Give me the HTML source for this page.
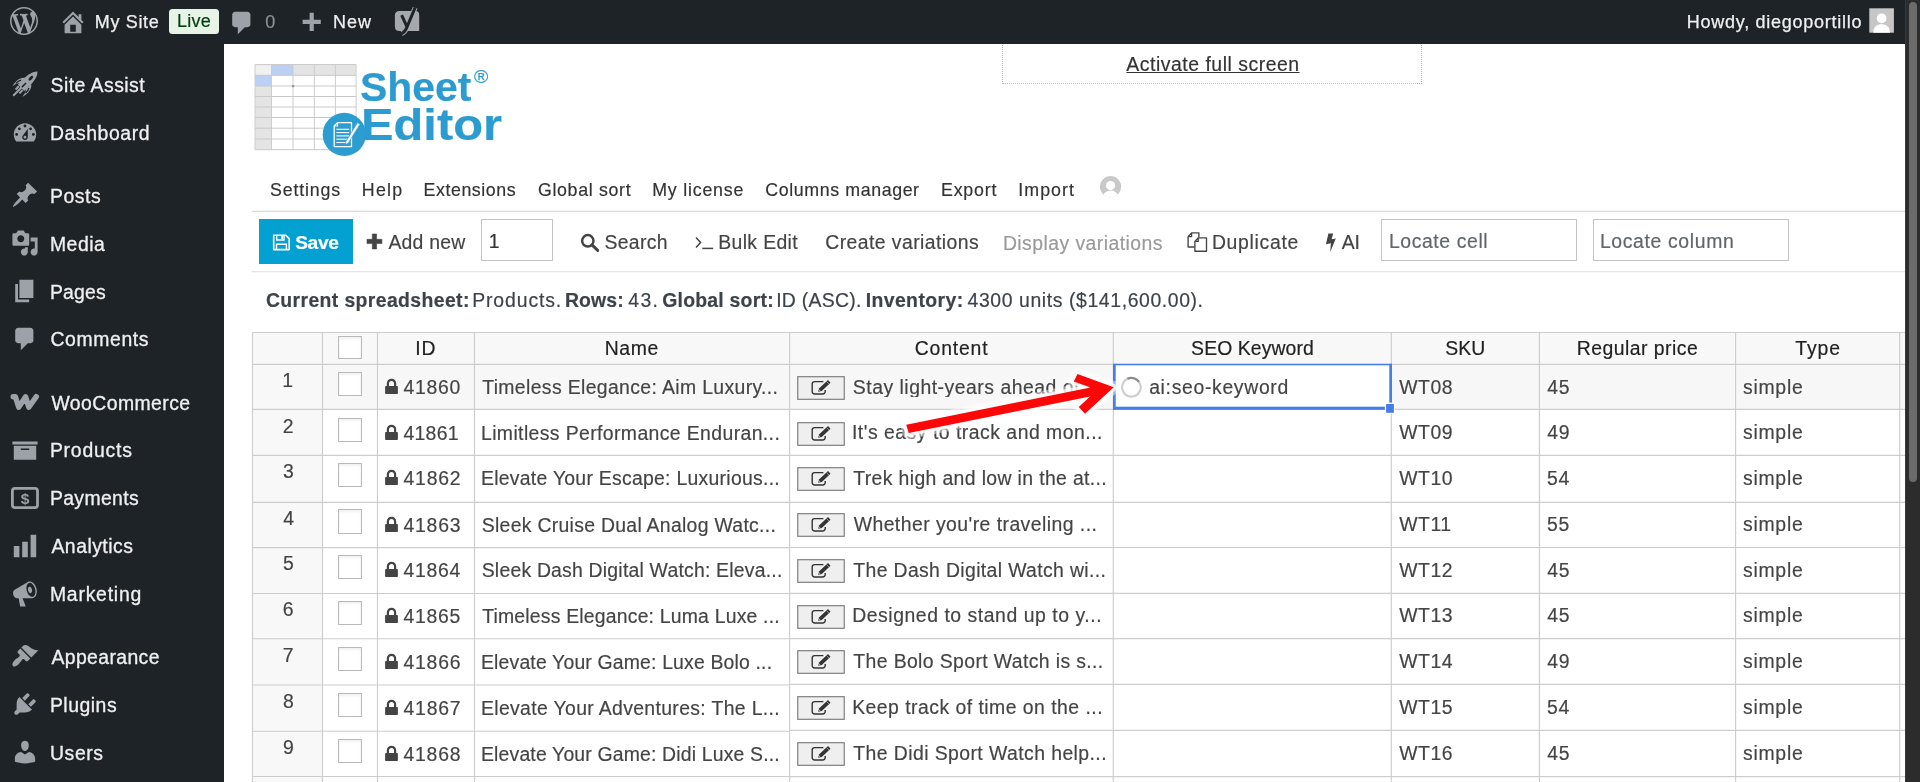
<!DOCTYPE html>
<html lang="en"><head><meta charset="utf-8"><title>Sheet Editor - Products</title>
<style>
html,body{margin:0;padding:0;background:#fff}
body{width:1920px;height:782px;overflow:hidden;position:relative;font-family:"Liberation Sans", sans-serif}
#wrap{position:absolute;left:0;top:0;width:1920px;height:782px;overflow:hidden;will-change:transform}
.t{position:absolute;white-space:nowrap;line-height:1;display:block;-webkit-text-stroke:0.18px currentColor}
.r{position:absolute;display:block;overflow:visible}
</style></head>
<body>
<div id="wrap">
<div class="r" style="left:1002px;top:40px;width:417.6px;height:42px;border:1px dotted #b4b4b4;box-sizing:content-box"></div>
<div class="r" style="left:0px;top:0px;width:1920px;height:44px;background:#1d2327;"></div>
<div class="r" style="left:0px;top:44px;width:224px;height:738px;background:#1d2327;"></div>
<svg class="r" style="left:9.7px;top:6.9px" width="28" height="28" viewBox="0 0 20 20"><path d="M20 10c0-5.51-4.49-10-10-10C4.48 0 0 4.49 0 10c0 5.52 4.48 10 10 10 5.51 0 10-4.48 10-10zM7.78 15.37L4.37 6.22c.55-.02 1.17-.08 1.17-.08.5-.06.44-1.13-.06-1.11 0 0-1.45.11-2.37.11-.18 0-.37 0-.58-.01C4.12 2.69 6.87 1.11 10 1.11c2.33 0 4.45.87 6.05 2.34-.68-.11-1.65.39-1.65 1.58 0 .74.45 1.36.9 2.1.35.61.55 1.36.55 2.46 0 1.49-1.4 5-1.4 5l-3.03-8.37c.54-.02.82-.17.82-.17.5-.05.44-1.25-.06-1.22 0 0-1.44.12-2.38.12-.87 0-2.33-.12-2.33-.12-.5-.03-.56 1.2-.06 1.22l.92.08 1.26 3.41zM17.41 10c.24-.64.74-1.87.43-4.25.7 1.29 1.05 2.71 1.05 4.25 0 3.29-1.73 6.24-4.4 7.78.97-2.59 1.94-5.2 2.92-7.78zM6.1 18.09C3.12 16.65 1.11 13.53 1.11 10c0-1.3.23-2.48.72-3.59C3.25 10.3 4.67 14.2 6.1 18.09zm4.03-6.63l2.58 6.98c-.86.29-1.76.45-2.71.45-.79 0-1.57-.11-2.29-.33.81-2.38 1.62-4.74 2.42-7.1z" fill="#9ca2a7"/></svg>
<svg class="r" style="left:58.8px;top:8.0px" width="28" height="28" viewBox="0 0 20 20"><path d="M16 8.5l1.53 1.53-1.06 1.06L10 4.62l-6.47 6.47-1.06-1.06L10 2.5l4 4v-2h2v4zm-6-2.46l6 5.99V18H4v-5.97zM12 17v-5H8v5h4z" fill="#9ca2a7"/></svg>
<span class="t" id="t1" style="left:94.82px;top:13.00px;font-size:18px;color:#f0f0f1;letter-spacing:0.660px;-webkit-text-stroke:0.25px #f0f0f1;">My Site</span>
<div class="r" style="left:169px;top:9px;width:50px;height:24.8px;background:#e7f3e7;border-radius:3.5px;"></div>
<span class="t" id="t2" style="left:177.12px;top:12.00px;font-size:18px;color:#07400f;letter-spacing:0.215px;-webkit-text-stroke:0.2px #07400f;">Live</span>
<svg class="r" style="left:228.4px;top:9.2px" width="28" height="28" viewBox="0 0 20 20"><path d="M5 2h9q.82 0 1.41.59T16 4v7q0 .82-.59 1.41T14 13h-2l-5 5v-5H5q-.82 0-1.41-.59T3 11V4q0-.82.59-1.41T5 2z" fill="#9ca2a7"/></svg>
<span class="t" id="t3" style="left:265.30px;top:13.00px;font-size:18px;color:#8c9196;">0</span>
<svg class="r" style="left:297.4px;top:9.8px" width="28" height="28" viewBox="0 0 20 20"><path d="M17 7v3h-5v5H9v-5H4V7h5V2h3v5h5z" fill="#9ca2a7"/></svg>
<span class="t" id="t4" style="left:333.12px;top:13.00px;font-size:18px;color:#f0f0f1;letter-spacing:0.908px;-webkit-text-stroke:0.25px #f0f0f1;">New</span>
<svg class="r" style="left:390px;top:2px" width="36" height="40" viewBox="390 2 36 40">
<path d="M399.4 11 H415.5 Q419.2 11 419.2 14.7 V31 H399.4 Q394.9 31 394.9 26.5 V15.5 Q394.9 11 399.4 11 Z" fill="#a5a9ae"/>
<path d="M415.2 7.6 L406.8 27.5 Q405 32.2 401.6 33.6 M401.6 15.4 L406.9 26.6" fill="none" stroke="#a5a9ae" stroke-width="5" stroke-linecap="butt" stroke-linejoin="round"/>
<path d="M415.2 7.4 L406.8 27.5 Q405 32.2 401.4 33.8 M401.6 15.2 L406.9 26.6" fill="none" stroke="#1d2327" stroke-width="3" stroke-linecap="butt" stroke-linejoin="round"/>
</svg>
<span class="t" id="t5" style="left:1686.82px;top:13.00px;font-size:18px;color:#f0f0f1;letter-spacing:0.730px;-webkit-text-stroke:0.25px #f0f0f1;">Howdy, diegoportillo</span>
<svg class="r" style="left:1869px;top:8px" width="26" height="26" viewBox="0 0 26 26">
<rect x="0.3" y="0.3" width="24.6" height="24.4" fill="#c6c6c6"/>
<circle cx="12.6" cy="10.3" r="4.9" fill="#fff"/>
<path d="M4.3 24.7 C4.3 18.5 8 16.2 12.6 16.2 C17.2 16.2 20.9 18.5 20.9 24.7 Z" fill="#fff"/>
</svg>
<span class="t" id="t6" style="left:50.62px;top:76.00px;font-size:19.4px;color:#f0f0f1;letter-spacing:0.457px;-webkit-text-stroke:0.3px #f0f0f1;">Site Assist</span>
<svg class="r" style="left:7.3px;top:66.0px" width="36" height="36" viewBox="-18 -18 36 36">
<g transform="rotate(45.3)" fill="#9ca2a7">
<path d="M0 -17.6 C4.2 -13.5 5.2 -6 4.4 5.6 L-4.4 5.6 C-5.2 -6 -4.2 -13.5 0 -17.6 Z"/>
<path d="M-4.3 -4.5 C-8.6 -1.5 -9 5 -7.2 10.8 C-6.8 7 -6 4.6 -4.3 3.2 Z M4.3 -4.5 C8.6 -1.5 9 5 7.2 10.8 C6.8 7 6 4.6 4.3 3.2 Z"/>
<path d="M0 5 L0 16.6 M-2.7 6 L-2.7 10.6 M2.7 6 L2.7 10.6" fill="none" stroke="#9ca2a7" stroke-width="2"/>
<ellipse cx="0" cy="-8.2" rx="1.5" ry="3" fill="#1d2327"/>
<path d="M-5.6 0 C-6.8 2 -7 4 -6.8 6 M5.6 0 C6.8 2 7 4 6.8 6" stroke="#1d2327" stroke-width="1.3" fill="none"/>
<path d="M0 -1.5 L0 4.4" stroke="#1d2327" stroke-width="1.5"/>
</g></svg>
<span class="t" id="t7" style="left:49.91px;top:124.00px;font-size:19.4px;color:#f0f0f1;letter-spacing:0.596px;-webkit-text-stroke:0.3px #f0f0f1;">Dashboard</span>
<svg class="r" style="left:10.8px;top:118.7px" width="28" height="28" viewBox="0 0 20 20"><path d="M3.76 16h12.48c1.1-1.37 1.76-3.11 1.76-5 0-4.42-3.58-8-8-8s-8 3.58-8 8c0 1.89.66 3.63 1.76 5zM10 4c.55 0 1 .45 1 1s-.45 1-1 1-1-.45-1-1 .45-1 1-1zM6 6c.55 0 1 .45 1 1s-.45 1-1 1-1-.45-1-1 .45-1 1-1zm8 0c.55 0 1 .45 1 1s-.45 1-1 1-1-.45-1-1 .45-1 1-1zm-5.37 5.55L12 7v6c0 1.1-.9 2-2 2s-2-.9-2-2c0-.57.24-1.08.63-1.45zM4 10c.55 0 1 .45 1 1s-.45 1-1 1-1-.45-1-1 .45-1 1-1zm12 0c.55 0 1 .45 1 1s-.45 1-1 1-1-.45-1-1 .45-1 1-1zm-5 3c0-.55-.45-1-1-1s-1 .45-1 1 .45 1 1 1 1-.45 1-1z" fill="#9ca2a7"/></svg>
<span class="t" id="t8" style="left:49.91px;top:187.00px;font-size:19.4px;color:#f0f0f1;letter-spacing:0.573px;-webkit-text-stroke:0.3px #f0f0f1;">Posts</span>
<svg class="r" style="left:10.8px;top:181.4px" width="28" height="28" viewBox="0 0 20 20"><path d="M10.44 3.02l1.82-1.82 6.36 6.35-1.83 1.82c-1.05-.68-2.48-.57-3.41.36l-.75.75c-.92.93-1.04 2.35-.35 3.41l-1.83 1.82-2.41-2.41-2.8 2.79c-.42.42-3.38 2.71-3.8 2.29s1.86-3.39 2.28-3.81l2.79-2.79L4.1 9.36l1.83-1.82c1.05.69 2.48.57 3.4-.36l.75-.75c.93-.92 1.05-2.35.36-3.41z" fill="#9ca2a7"/></svg>
<span class="t" id="t9" style="left:49.91px;top:235.00px;font-size:19.4px;color:#f0f0f1;letter-spacing:0.541px;-webkit-text-stroke:0.3px #f0f0f1;">Media</span>
<svg class="r" style="left:10.8px;top:229.4px" width="28" height="28" viewBox="0 0 20 20"><path d="M13 11V4c0-.55-.45-1-1-1h-1.67L9 1H5L3.67 3H2c-.55 0-1 .45-1 1v7c0 .55.45 1 1 1h10c.55 0 1-.45 1-1zM7 4.5c1.38 0 2.5 1.12 2.5 2.5S8.38 9.5 7 9.5 4.5 8.38 4.5 7 5.62 4.5 7 4.5zM14 6h5v10.5c0 1.38-1.12 2.5-2.5 2.5S14 17.88 14 16.5s1.12-2.5 2.5-2.5c.17 0 .34.02.5.05V9h-3V6zm-4 8.05V13h2v3.5c0 1.38-1.12 2.5-2.5 2.5S7 17.88 7 16.5 8.12 14 9.5 14c.17 0 .34.02.5.05z" fill="#9ca2a7"/></svg>
<span class="t" id="t10" style="left:49.91px;top:283.00px;font-size:19.4px;color:#f0f0f1;letter-spacing:0.177px;-webkit-text-stroke:0.3px #f0f0f1;">Pages</span>
<svg class="r" style="left:10.8px;top:277.3px" width="28" height="28" viewBox="0 0 20 20"><path d="M6 15V2h10v13H6zm-1 1h8v2H3V5h2v11z" fill="#9ca2a7"/></svg>
<span class="t" id="t11" style="left:50.51px;top:330.00px;font-size:19.4px;color:#f0f0f1;letter-spacing:0.605px;-webkit-text-stroke:0.3px #f0f0f1;">Comments</span>
<svg class="r" style="left:10.8px;top:324.8px" width="28" height="28" viewBox="0 0 20 20"><path d="M5 2h9q.82 0 1.41.59T16 4v7q0 .82-.59 1.41T14 13h-2l-5 5v-5H5q-.82 0-1.41-.59T3 11V4q0-.82.59-1.41T5 2z" fill="#9ca2a7"/></svg>
<span class="t" id="t12" style="left:51.41px;top:394.00px;font-size:19.4px;color:#f0f0f1;letter-spacing:0.440px;-webkit-text-stroke:0.3px #f0f0f1;">WooCommerce</span>
<svg class="r" style="left:8px;top:389.8px" width="36" height="24" viewBox="8 -12 36 24">
<path d="M13.2 -5.3 L15.4 -5.3 L18.7 5.2 L25.6 -5.2 L28.8 5.2 L36.3 -5.4" fill="none" stroke="#9ca2a7" stroke-width="5.4" stroke-linecap="round" stroke-linejoin="round"/></svg>
<span class="t" id="t13" style="left:49.91px;top:441.00px;font-size:19.4px;color:#f0f0f1;letter-spacing:0.780px;-webkit-text-stroke:0.3px #f0f0f1;">Products</span>
<svg class="r" style="left:10.8px;top:435.7px" width="28" height="28" viewBox="0 0 20 20"><path d="M19 4v2H1V4h18zM2 7h16v10H2V7zm11 3V9H7v1h6z" fill="#9ca2a7"/></svg>
<span class="t" id="t14" style="left:49.91px;top:489.00px;font-size:19.4px;color:#f0f0f1;letter-spacing:0.368px;-webkit-text-stroke:0.3px #f0f0f1;">Payments</span>
<svg class="r" style="left:8px;top:483.9px" width="36" height="28" viewBox="8 -14 36 28">
<rect x="12.4" y="-9.6" width="25.1" height="19.2" rx="2.6" fill="none" stroke="#9ca2a7" stroke-width="2.8"/>
<text x="25.1" y="5.6" font-family="Liberation Sans, sans-serif" font-weight="700" font-size="15.5" text-anchor="middle" fill="#9ca2a7">$</text></svg>
<span class="t" id="t15" style="left:51.46px;top:537.00px;font-size:19.4px;color:#f0f0f1;letter-spacing:0.481px;-webkit-text-stroke:0.3px #f0f0f1;">Analytics</span>
<svg class="r" style="left:10.8px;top:531.6px" width="28" height="28" viewBox="0 0 20 20"><path d="M18 18V2h-4v16h4zm-6 0V7H8v11h4zm-6 0v-8H2v8h4z" fill="#9ca2a7"/></svg>
<span class="t" id="t16" style="left:49.91px;top:585.00px;font-size:19.4px;color:#f0f0f1;letter-spacing:0.775px;-webkit-text-stroke:0.3px #f0f0f1;">Marketing</span>
<svg class="r" style="left:10.8px;top:579.5px" width="28" height="28" viewBox="0 0 20 20"><path d="M18.15 5.94c.46 1.62.38 3.22-.02 4.48-.42 1.28-1.26 2.18-2.3 2.48-.16.06-.26.06-.4.06-.06.02-.12.02-.18.02-.06.02-.14.02-.22.02h-6.8l2.22 5.5c.02.14-.06.26-.14.34-.08.1-.24.16-.34.16H6.95c-.1 0-.26-.06-.34-.16-.08-.08-.16-.2-.14-.34l-1-5.5H4.25l-.02-.02c-.5.06-1.08-.18-1.54-.62s-.88-1.08-1.06-1.88c-.24-.8-.2-1.56-.02-2.2.18-.62.58-1.08 1.06-1.3l.02-.02 9-5.4c.1-.06.18-.1.24-.16.06-.04.14-.08.24-.12.16-.08.28-.12.5-.18 1.04-.3 2.24.1 3.22.98s1.84 2.24 2.26 3.86zm-2.58 5.98h-.02c.4-.1.74-.34 1.04-.7.58-.7.86-1.76.86-3.04 0-.64-.1-1.3-.28-1.98-.34-1.36-1.02-2.5-1.78-3.24s-1.68-1.1-2.46-.88c-.82.22-1.4.96-1.7 2-.32 1.04-.28 2.36.06 3.72.38 1.36 1 2.5 1.8 3.24.78.74 1.62 1.1 2.48.88zm-2.54-7.08c.22-.04.42-.02.62.04.38.16.76.48 1.02 1s.42 1.2.42 1.78c0 .3-.04.56-.12.8-.18.48-.44.84-.86.94-.34.1-.8-.06-1.14-.4s-.64-.86-.78-1.5c-.18-.62-.12-1.24.02-1.72s.48-.84.82-.94z" fill="#9ca2a7"/></svg>
<span class="t" id="t17" style="left:51.46px;top:648.00px;font-size:19.4px;color:#f0f0f1;letter-spacing:0.380px;-webkit-text-stroke:0.3px #f0f0f1;">Appearance</span>
<svg class="r" style="left:10.8px;top:642.2px" width="28" height="28" viewBox="0 0 20 20"><path d="M14.48 11.06L7.41 3.99l1.5-1.5c.5-.56 2.3-.47 3.51.32 1.21.8 1.43 1.28 2.91 2.1 1.18.64 2.45 1.26 4.45.85zm-.71.71L6.7 4.7 4.93 6.47c-.39.39-.39 1.02 0 1.41l1.06 1.06c.39.39.39 1.03 0 1.42-.6.6-1.43 1.11-2.21 1.69-.35.26-.7.53-1.01.84C1.43 14.23.4 16.08 1.4 17.07c.99 1 2.84-.03 4.18-1.36.31-.31.58-.66.85-1.02.57-.78 1.08-1.61 1.69-2.21.39-.39 1.02-.39 1.41 0l1.06 1.06c.39.39 1.02.39 1.41 0z" fill="#9ca2a7"/></svg>
<span class="t" id="t18" style="left:49.91px;top:696.00px;font-size:19.4px;color:#f0f0f1;letter-spacing:0.514px;-webkit-text-stroke:0.3px #f0f0f1;">Plugins</span>
<svg class="r" style="left:10.8px;top:690.3px" width="28" height="28" viewBox="0 0 20 20"><path d="M13.11 4.36L9.87 7.6 8 5.73l3.24-3.24c.35-.34 1.05-.2 1.56.32.52.51.66 1.21.31 1.55zm-8 1.77l.91-1.12 9.01 9.01-1.19.84c-.71.71-2.63 1.16-3.82 1.16H6.14L4.9 17.26c-.59.59-1.54.59-2.12 0-.59-.58-.59-1.53 0-2.12l1.24-1.24v-3.88c0-1.13.4-3.19 1.09-3.89zm7.26 3.97l3.24-3.24c.34-.35 1.04-.21 1.55.31.52.51.66 1.21.31 1.55l-3.24 3.25z" fill="#9ca2a7"/></svg>
<span class="t" id="t19" style="left:50.00px;top:744.00px;font-size:19.4px;color:#f0f0f1;letter-spacing:0.589px;-webkit-text-stroke:0.3px #f0f0f1;">Users</span>
<svg class="r" style="left:10.8px;top:738.1px" width="28" height="28" viewBox="0 0 20 20"><path d="M10 9.25c-2.27 0-2.73-3.44-2.73-3.44C7 4.02 7.82 2 9.97 2c2.16 0 2.98 2.02 2.71 3.81 0 0-.41 3.44-2.68 3.44zm0 2.57L12.72 10c2.39 0 4.52 2.33 4.52 4.53v2.49s-3.65 1.13-7.24 1.13c-3.65 0-7.24-1.13-7.24-1.13v-2.49c0-2.25 1.94-4.48 4.47-4.48z" fill="#9ca2a7"/></svg>
<span class="t" id="t20" style="left:1126.36px;top:55.00px;font-size:19.4px;color:#333;letter-spacing:0.524px;text-decoration:underline;text-decoration-thickness:1.4px;text-underline-offset:0.8px;">Activate full screen</span>
<svg class="r" style="left:250px;top:60px" width="120" height="100" viewBox="250 60 120 100"><rect x="255" y="64.6" width="101.1" height="85.1" fill="#fff"/><rect x="255" y="64.6" width="101.1" height="10.7" fill="#e4e4e4"/><rect x="255" y="64.6" width="16.5" height="85.1" fill="#e4e4e4"/><rect x="255" y="64.6" width="16.5" height="10.7" fill="#f1f1f1"/><rect x="271.5" y="64.6" width="21.5" height="10.7" fill="#bcd0f6"/><rect x="255" y="75.3" width="16.5" height="10.7" fill="#bcd0f6"/><line x1="255" y1="64.6" x2="255" y2="149.7" stroke="#cdcdcd" stroke-width="1"/><line x1="271.5" y1="64.6" x2="271.5" y2="149.7" stroke="#cdcdcd" stroke-width="1"/><line x1="293" y1="64.6" x2="293" y2="149.7" stroke="#cdcdcd" stroke-width="1"/><line x1="314.4" y1="64.6" x2="314.4" y2="149.7" stroke="#cdcdcd" stroke-width="1"/><line x1="335.4" y1="64.6" x2="335.4" y2="149.7" stroke="#cdcdcd" stroke-width="1"/><line x1="356.1" y1="64.6" x2="356.1" y2="149.7" stroke="#cdcdcd" stroke-width="1"/><line x1="255" y1="64.6" x2="356.1" y2="64.6" stroke="#c9c9c9" stroke-width="1"/><line x1="255" y1="75.3" x2="356.1" y2="75.3" stroke="#c9c9c9" stroke-width="1"/><line x1="255" y1="86" x2="356.1" y2="86" stroke="#c9c9c9" stroke-width="1"/><line x1="255" y1="96.5" x2="356.1" y2="96.5" stroke="#c9c9c9" stroke-width="1"/><line x1="255" y1="107" x2="356.1" y2="107" stroke="#c9c9c9" stroke-width="1"/><line x1="255" y1="117.5" x2="356.1" y2="117.5" stroke="#c9c9c9" stroke-width="1"/><line x1="255" y1="128.2" x2="356.1" y2="128.2" stroke="#c9c9c9" stroke-width="1"/><line x1="255" y1="139" x2="356.1" y2="139" stroke="#c9c9c9" stroke-width="1"/><line x1="255" y1="149.7" x2="356.1" y2="149.7" stroke="#c9c9c9" stroke-width="1"/><rect x="292" y="85" width="2.2" height="2.2" fill="#999"/><circle cx="344.3" cy="134.4" r="21.6" fill="#2b9dd1"/><path d="M337.6 122.6 H351.5 V146.6 H334.2 V126 Z" fill="none" stroke="#fff" stroke-width="1.3" stroke-linejoin="round"/><path d="M337.6 122.6 V126 H334.2" fill="none" stroke="#fff" stroke-width="1.1"/><line x1="336.3" y1="129.3" x2="349.2" y2="129.3" stroke="#fff" stroke-width="1.1"/><line x1="336.3" y1="132.6" x2="349.2" y2="132.6" stroke="#fff" stroke-width="1.1"/><line x1="336.3" y1="135.9" x2="349.2" y2="135.9" stroke="#fff" stroke-width="1.1"/><line x1="336.3" y1="139.2" x2="349.2" y2="139.2" stroke="#fff" stroke-width="1.1"/><line x1="336.3" y1="142.5" x2="349.2" y2="142.5" stroke="#fff" stroke-width="1.1"/><path d="M357.5 122.6 L346.0 141.2 L345.3 145.0 L348.5 142.8 L360.0 124.2 Z" fill="#fff" stroke="#2b9dd1" stroke-width="0.7"/></svg>
<span class="t" id="t21" style="left:360.12px;top:68.00px;font-size:40.2px;color:#2b9bd0;font-weight:700;transform:scaleX(1.0187);transform-origin:0 0;">Sheet</span>
<span class="t" id="t22" style="left:360.53px;top:102.00px;font-size:45px;color:#2b9bd0;font-weight:700;transform:scaleX(1.0846);transform-origin:0 0;">Editor</span>
<span class="t" id="t23" style="left:474.31px;top:68.00px;font-size:18.6px;color:#2b9bd0;transform:scaleX(1.0433);transform-origin:0 0;">®</span>
<span class="t" id="t24" style="left:269.99px;top:182.00px;font-size:17.8px;color:#333;letter-spacing:0.843px;">Settings</span>
<span class="t" id="t25" style="left:361.84px;top:182.00px;font-size:17.8px;color:#333;letter-spacing:1.210px;">Help</span>
<span class="t" id="t26" style="left:423.54px;top:182.00px;font-size:17.8px;color:#333;letter-spacing:0.569px;">Extensions</span>
<span class="t" id="t27" style="left:537.90px;top:182.00px;font-size:17.8px;color:#333;letter-spacing:0.674px;">Global sort</span>
<span class="t" id="t28" style="left:652.29px;top:182.00px;font-size:17.8px;color:#333;letter-spacing:0.778px;">My license</span>
<span class="t" id="t29" style="left:765.35px;top:182.00px;font-size:17.8px;color:#333;letter-spacing:0.601px;">Columns manager</span>
<span class="t" id="t30" style="left:941.04px;top:182.00px;font-size:17.8px;color:#333;letter-spacing:0.790px;">Export</span>
<span class="t" id="t31" style="left:1018.36px;top:182.00px;font-size:17.8px;color:#333;letter-spacing:1.023px;">Import</span>
<svg class="r" style="left:1099px;top:176px" width="24" height="24" viewBox="0 0 24 24">
<defs><clipPath id="avc"><circle cx="11.6" cy="10.7" r="10.6"/></clipPath></defs>
<circle cx="11.6" cy="10.7" r="10.6" fill="#c9c9c9"/>
<g clip-path="url(#avc)"><circle cx="11.6" cy="9.6" r="4.6" fill="#fff"/><ellipse cx="11.6" cy="22.2" rx="8.2" ry="7.6" fill="#fff"/></g></svg>
<svg class="r" style="left:224px;top:200px" width="1681" height="80" viewBox="224 200 1681 80"><line x1="251.5" y1="211.3" x2="1905" y2="211.3" stroke="#d2d2d2" stroke-width="1.05"/><line x1="251.5" y1="271.7" x2="1905" y2="271.7" stroke="#dedede" stroke-width="1.05"/></svg>
<div class="r" style="left:259.2px;top:219.2px;width:93.5px;height:44.5px;background:#03a0d2;"></div>
<svg class="r" style="left:272px;top:233px" width="19" height="18" viewBox="272 233 19 18">
<path d="M273.7 235.2 H285.8 L289.2 238.6 V249.6 H273.7 Z" fill="none" stroke="#fff" stroke-width="1.6" stroke-linejoin="round"/>
<path d="M276.7 235.2 V240 H284 V235.2" fill="none" stroke="#fff" stroke-width="1.4"/>
<rect x="281.3" y="236" width="1.7" height="3" fill="#fff"/>
<path d="M276.5 249.6 V244.2 H286.4 V249.6" fill="none" stroke="#fff" stroke-width="1.4"/>
</svg>
<span class="t" id="t32" style="left:295.15px;top:233.00px;font-size:19.2px;color:#fff;font-weight:700;letter-spacing:-0.334px;">Save</span>
<svg class="r" style="left:366px;top:233px" width="17" height="17" viewBox="366 233 17 17"><path d="M372.3 234 h4.3 v5.3 h5.3 v4.3 h-5.3 v5.3 h-4.3 v-5.3 h-5.3 v-4.3 h5.3 Z" fill="#444" stroke="#444" stroke-width="0.6" stroke-linejoin="round"/></svg>
<span class="t" id="t33" style="left:388.46px;top:233.00px;font-size:19.4px;color:#444;letter-spacing:0.220px;">Add new</span>
<div class="r" style="left:481px;top:219px;width:69.6px;height:39.6px;border:1px solid #c4c4c4;background:#fff;box-sizing:content-box"></div>
<span class="t" id="t34" style="left:488.82px;top:232.00px;font-size:19.4px;color:#333;">1</span>
<svg class="r" style="left:579px;top:232px" width="22" height="22" viewBox="579 232 22 22"><circle cx="587.8" cy="240.8" r="5.7" fill="none" stroke="#444" stroke-width="2.5"/><line x1="592.2" y1="245.2" x2="597.7" y2="250.4" stroke="#444" stroke-width="3" stroke-linecap="round"/></svg>
<span class="t" id="t35" style="left:604.42px;top:233.00px;font-size:19.4px;color:#444;letter-spacing:0.338px;">Search</span>
<svg class="r" style="left:693px;top:234px" width="22" height="18" viewBox="693 234 22 18"><path d="M696 237.6 L700.6 242.5 L696 247.4" fill="none" stroke="#444" stroke-width="1.5"/><line x1="702.3" y1="248.4" x2="713.2" y2="248.4" stroke="#444" stroke-width="1.5"/></svg>
<span class="t" id="t36" style="left:718.31px;top:233.00px;font-size:19.4px;color:#444;letter-spacing:0.350px;">Bulk Edit</span>
<span class="t" id="t37" style="left:825.26px;top:233.00px;font-size:19.4px;color:#444;letter-spacing:0.429px;">Create variations</span>
<span class="t" id="t38" style="left:1002.91px;top:234.00px;font-size:19.4px;color:#9a9a9a;letter-spacing:0.446px;">Display variations</span>
<svg class="r" style="left:1186px;top:231px" width="23" height="22" viewBox="1186 231 23 22">
<path d="M1191.6 232.9 H1198.9 V237.6 M1194.6 247 H1188.1 V236.6 L1191.6 232.9 V236.6 H1188.1" fill="none" stroke="#444" stroke-width="1.35" stroke-linejoin="round"/>
<path d="M1198.2 237.9 H1206.5 V251.2 H1194.9 V241.4 Z M1198.2 237.9 V241.4 H1194.9" fill="#fff" stroke="#444" stroke-width="1.35" stroke-linejoin="round"/>
</svg>
<span class="t" id="t39" style="left:1211.91px;top:233.00px;font-size:19.4px;color:#444;letter-spacing:0.701px;">Duplicate</span>
<svg class="r" style="left:1324px;top:232px" width="14" height="21" viewBox="1324 232 14 21"><path d="M1328.4 233.6 L1333.2 233.6 L1331.6 239.3 L1335.8 238.6 L1330.2 251.9 L1330.9 243.2 L1325.9 244.2 Z" fill="#444"/></svg>
<span class="t" id="t40" style="left:1341.86px;top:233.00px;font-size:19.4px;color:#444;letter-spacing:-0.200px;">AI</span>
<div class="r" style="left:1381px;top:219px;width:193.8px;height:39.6px;border:1px solid #c4c4c4;background:#fff;box-sizing:content-box"></div>
<span class="t" id="t41" style="left:1388.91px;top:232.00px;font-size:19.4px;color:#60666c;letter-spacing:0.599px;">Locate cell</span>
<div class="r" style="left:1593px;top:219px;width:193.8px;height:39.6px;border:1px solid #c4c4c4;background:#fff;box-sizing:content-box"></div>
<span class="t" id="t42" style="left:1599.91px;top:232.00px;font-size:19.4px;color:#60666c;letter-spacing:0.644px;">Locate column</span>
<span class="t" id="t43" style="left:265.95px;top:291.00px;font-size:19.4px;color:#3c434a;font-weight:700;letter-spacing:0.384px;">Current spreadsheet:</span>
<span class="t" id="t44" style="left:472.16px;top:291.00px;font-size:19.4px;color:#3c434a;letter-spacing:0.899px;">Products.</span>
<span class="t" id="t45" style="left:564.95px;top:291.00px;font-size:19.4px;color:#3c434a;font-weight:700;letter-spacing:0.119px;">Rows:</span>
<span class="t" id="t46" style="left:628.30px;top:291.00px;font-size:19.4px;color:#3c434a;letter-spacing:1.374px;">43.</span>
<span class="t" id="t47" style="left:662.20px;top:291.00px;font-size:19.4px;color:#3c434a;font-weight:700;letter-spacing:0.236px;">Global sort:</span>
<span class="t" id="t48" style="left:776.21px;top:291.00px;font-size:19.4px;color:#3c434a;letter-spacing:0.264px;">ID (ASC).</span>
<span class="t" id="t49" style="left:865.70px;top:291.00px;font-size:19.4px;color:#3c434a;font-weight:700;letter-spacing:0.409px;">Inventory:</span>
<span class="t" id="t50" style="left:967.55px;top:291.00px;font-size:19.4px;color:#3c434a;letter-spacing:0.602px;">4300 units ($141,600.00).</span>
<svg class="r" style="left:224px;top:320px" width="1681" height="462" viewBox="224 320 1681 462" shape-rendering="auto"><rect x="252.5" y="332.5" width="1652.5" height="32.0" fill="#f8f8f8"/><rect x="252.5" y="364.5" width="70.0" height="417.5" fill="#f8f8f8"/><rect x="322.5" y="364.5" width="1582.5" height="44.89999999999998" fill="#f7f7f7"/><rect x="1113.3" y="364.5" width="278.0" height="44.89999999999998" fill="#fff"/><line x1="252.5" y1="332.5" x2="1905" y2="332.5" stroke="#cdcdcd" stroke-width="1.15"/><line x1="252.5" y1="364.40" x2="789.6" y2="364.40" stroke="#cdcdcd" stroke-width="1.15"/><line x1="789.6" y1="364.40" x2="1905" y2="364.40" stroke="#cdcdcd" stroke-width="1.15"/><line x1="252.5" y1="409.40" x2="789.6" y2="409.40" stroke="#cdcdcd" stroke-width="1.15"/><line x1="789.6" y1="409.40" x2="1905" y2="409.40" stroke="#cdcdcd" stroke-width="1.15"/><line x1="252.5" y1="455.40" x2="789.6" y2="455.40" stroke="#cdcdcd" stroke-width="1.15"/><line x1="789.6" y1="455.30" x2="1905" y2="455.30" stroke="#cdcdcd" stroke-width="1.15"/><line x1="252.5" y1="502.30" x2="789.6" y2="502.30" stroke="#cdcdcd" stroke-width="1.15"/><line x1="789.6" y1="502.30" x2="1905" y2="502.30" stroke="#cdcdcd" stroke-width="1.15"/><line x1="252.5" y1="547.60" x2="789.6" y2="547.60" stroke="#cdcdcd" stroke-width="1.15"/><line x1="789.6" y1="547.50" x2="1905" y2="547.50" stroke="#cdcdcd" stroke-width="1.15"/><line x1="252.5" y1="593.50" x2="789.6" y2="593.50" stroke="#cdcdcd" stroke-width="1.15"/><line x1="789.6" y1="593.40" x2="1905" y2="593.40" stroke="#cdcdcd" stroke-width="1.15"/><line x1="252.5" y1="638.70" x2="789.6" y2="638.70" stroke="#cdcdcd" stroke-width="1.15"/><line x1="789.6" y1="638.60" x2="1905" y2="638.60" stroke="#cdcdcd" stroke-width="1.15"/><line x1="252.5" y1="685.00" x2="789.6" y2="685.00" stroke="#cdcdcd" stroke-width="1.15"/><line x1="789.6" y1="684.40" x2="1905" y2="684.40" stroke="#cdcdcd" stroke-width="1.15"/><line x1="252.5" y1="731.20" x2="789.6" y2="731.20" stroke="#cdcdcd" stroke-width="1.15"/><line x1="789.6" y1="730.40" x2="1905" y2="730.40" stroke="#cdcdcd" stroke-width="1.15"/><line x1="252.5" y1="776.50" x2="789.6" y2="776.50" stroke="#cdcdcd" stroke-width="1.15"/><line x1="789.6" y1="776.60" x2="1905" y2="776.60" stroke="#cdcdcd" stroke-width="1.15"/><line x1="252.5" y1="332.5" x2="252.5" y2="782" stroke="#cdcdcd" stroke-width="1.15"/><line x1="322.5" y1="332.5" x2="322.5" y2="782" stroke="#cdcdcd" stroke-width="1.15"/><line x1="377.5" y1="332.5" x2="377.5" y2="782" stroke="#cdcdcd" stroke-width="1.15"/><line x1="474.5" y1="332.5" x2="474.5" y2="782" stroke="#cdcdcd" stroke-width="1.15"/><line x1="789.6" y1="332.5" x2="789.6" y2="782" stroke="#cdcdcd" stroke-width="1.15"/><line x1="1113.3" y1="332.5" x2="1113.3" y2="782" stroke="#cdcdcd" stroke-width="1.15"/><line x1="1391.3" y1="332.5" x2="1391.3" y2="782" stroke="#cdcdcd" stroke-width="1.15"/><line x1="1539.4" y1="332.5" x2="1539.4" y2="782" stroke="#cdcdcd" stroke-width="1.15"/><line x1="1735.6" y1="332.5" x2="1735.6" y2="782" stroke="#cdcdcd" stroke-width="1.15"/><line x1="1899.7" y1="332.5" x2="1899.7" y2="782" stroke="#cdcdcd" stroke-width="1.15"/><rect x="1113.0" y="363.8" width="2.7" height="46" fill="#467de6"/><rect x="1389.3" y="363.8" width="2.7" height="46" fill="#467de6"/><rect x="1113.0" y="363.8" width="279" height="1.5" fill="#467de6"/><rect x="1113.0" y="406.7" width="279" height="3.1" fill="#467de6"/><rect x="1384.9" y="402.6" width="10.2" height="11.4" fill="#fff"/><rect x="1386.1" y="404.0" width="7.8" height="8.8" fill="#467de6"/></svg>
<span class="t" id="t51" style="left:415.21px;top:339.00px;font-size:19.4px;color:#222;letter-spacing:0.812px;">ID</span>
<span class="t" id="t52" style="left:604.66px;top:339.00px;font-size:19.4px;color:#222;letter-spacing:0.656px;">Name</span>
<span class="t" id="t53" style="left:914.76px;top:339.00px;font-size:19.4px;color:#222;letter-spacing:0.826px;">Content</span>
<span class="t" id="t54" style="left:1191.12px;top:339.00px;font-size:19.4px;color:#222;letter-spacing:0.085px;">SEO Keyword</span>
<span class="t" id="t55" style="left:1445.37px;top:339.00px;font-size:19.4px;color:#222;letter-spacing:0.001px;">SKU</span>
<span class="t" id="t56" style="left:1576.71px;top:339.00px;font-size:19.4px;color:#222;letter-spacing:0.477px;">Regular price</span>
<span class="t" id="t57" style="left:1795.36px;top:339.00px;font-size:19.4px;color:#222;letter-spacing:0.850px;">Type</span>
<div class="r" style="left:338.2px;top:336.2px;width:21.6px;height:20.7px;border:1px solid #b9b9b9;background:#fff;box-shadow:inset 0 1.4px 2.8px rgba(0,0,0,.07);box-sizing:content-box"></div>
<span class="t" id="t58" style="left:282.32px;top:371.00px;font-size:19.4px;color:#444;">1</span>
<div class="r" style="left:338.2px;top:371.5px;width:21.6px;height:22.2px;border:1px solid #b9b9b9;background:#fff;box-shadow:inset 0 1.4px 2.8px rgba(0,0,0,.07);box-sizing:content-box"></div>
<svg class="r" style="left:383px;top:375.6px" width="17" height="22" viewBox="-8.5 -11 17 22">
<path d="M-3.6 -0.4 V-3.6 A3.6 3.6 0 0 1 3.6 -3.6 V-0.4" fill="none" stroke="#444" stroke-width="2.2"/>
<rect x="-6.4" y="-0.9" width="12.8" height="8" rx="0.8" fill="#444"/></svg>
<span class="t" id="t59" style="left:403.55px;top:378.00px;font-size:19.4px;color:#444;letter-spacing:0.720px;">41860</span>
<span class="t" id="t60" style="left:482.16px;top:378.00px;font-size:19.4px;color:#444;letter-spacing:0.366px;">Timeless Elegance: Aim Luxury...</span>
<svg class="r" style="left:795px;top:373.75px" width="52" height="28" viewBox="-26 -14 52 28">
<rect x="-23.25" y="-11.3" width="46.5" height="22.6" fill="#efefef" stroke="#7a7a7a" stroke-width="1.15"/>
<g transform="translate(0,-0.4)">
<path d="M2.4 -6.0 H-6.4 A2.4 2.4 0 0 0 -8.8 -3.6 V4.0 A2.4 2.4 0 0 0 -6.4 6.4 H1.8 A2.4 2.4 0 0 0 4.2 4.0 V2.4" fill="none" stroke="#333" stroke-width="1.4"/>
<path d="M-2.9 4.2 L-1.76 0.6 L7.0 -7.5 L9.5 -4.8 L0.76 3.3 Z" fill="#333"/>
<path d="M-1.9 3.3 L-1.5 2.0 L-0.6 2.9 Z" fill="#efefef"/>
<path d="M5.6 -6.1 L8.0 -3.5" stroke="#efefef" stroke-width="0.5"/>
</g></svg>
<span class="t" id="t61" style="left:852.87px;top:378.00px;font-size:19.4px;color:#444;letter-spacing:0.500px;width:226px;overflow:hidden;">Stay light-years ahead of t...</span>
<span class="t" id="t62" style="left:1399.21px;top:378.00px;font-size:19.4px;color:#444;letter-spacing:0.550px;">WT08</span>
<span class="t" id="t63" style="left:1547.25px;top:378.00px;font-size:19.4px;color:#444;letter-spacing:0.700px;">45</span>
<span class="t" id="t64" style="left:1742.96px;top:378.00px;font-size:19.4px;color:#444;letter-spacing:0.751px;">simple</span>
<span class="t" id="t65" style="left:282.82px;top:417.00px;font-size:19.4px;color:#444;">2</span>
<div class="r" style="left:338.2px;top:417.7px;width:21.6px;height:22.2px;border:1px solid #b9b9b9;background:#fff;box-shadow:inset 0 1.4px 2.8px rgba(0,0,0,.07);box-sizing:content-box"></div>
<svg class="r" style="left:383px;top:421.8px" width="17" height="22" viewBox="-8.5 -11 17 22">
<path d="M-3.6 -0.4 V-3.6 A3.6 3.6 0 0 1 3.6 -3.6 V-0.4" fill="none" stroke="#444" stroke-width="2.2"/>
<rect x="-6.4" y="-0.9" width="12.8" height="8" rx="0.8" fill="#444"/></svg>
<span class="t" id="t66" style="left:403.55px;top:424.00px;font-size:19.4px;color:#444;letter-spacing:0.243px;">41861</span>
<span class="t" id="t67" style="left:481.01px;top:424.00px;font-size:19.4px;color:#444;letter-spacing:0.390px;">Limitless Performance Enduran...</span>
<svg class="r" style="left:795px;top:419.53px" width="52" height="28" viewBox="-26 -14 52 28">
<rect x="-23.25" y="-11.3" width="46.5" height="22.6" fill="#efefef" stroke="#7a7a7a" stroke-width="1.15"/>
<g transform="translate(0,-0.4)">
<path d="M2.4 -6.0 H-6.4 A2.4 2.4 0 0 0 -8.8 -3.6 V4.0 A2.4 2.4 0 0 0 -6.4 6.4 H1.8 A2.4 2.4 0 0 0 4.2 4.0 V2.4" fill="none" stroke="#333" stroke-width="1.4"/>
<path d="M-2.9 4.2 L-1.76 0.6 L7.0 -7.5 L9.5 -4.8 L0.76 3.3 Z" fill="#333"/>
<path d="M-1.9 3.3 L-1.5 2.0 L-0.6 2.9 Z" fill="#efefef"/>
<path d="M5.6 -6.1 L8.0 -3.5" stroke="#efefef" stroke-width="0.5"/>
</g></svg>
<span class="t" id="t68" style="left:851.96px;top:423.00px;font-size:19.4px;color:#444;letter-spacing:0.502px;">It's easy to track and mon...</span>
<span class="t" id="t69" style="left:1399.21px;top:423.00px;font-size:19.4px;color:#444;letter-spacing:0.550px;">WT09</span>
<span class="t" id="t70" style="left:1547.25px;top:423.00px;font-size:19.4px;color:#444;letter-spacing:0.700px;">49</span>
<span class="t" id="t71" style="left:1742.96px;top:423.00px;font-size:19.4px;color:#444;letter-spacing:0.751px;">simple</span>
<span class="t" id="t72" style="left:283.06px;top:462.00px;font-size:19.4px;color:#444;">3</span>
<div class="r" style="left:338.2px;top:463.2px;width:21.6px;height:22.2px;border:1px solid #b9b9b9;background:#fff;box-shadow:inset 0 1.4px 2.8px rgba(0,0,0,.07);box-sizing:content-box"></div>
<svg class="r" style="left:383px;top:467.3px" width="17" height="22" viewBox="-8.5 -11 17 22">
<path d="M-3.6 -0.4 V-3.6 A3.6 3.6 0 0 1 3.6 -3.6 V-0.4" fill="none" stroke="#444" stroke-width="2.2"/>
<rect x="-6.4" y="-0.9" width="12.8" height="8" rx="0.8" fill="#444"/></svg>
<span class="t" id="t73" style="left:403.55px;top:469.00px;font-size:19.4px;color:#444;letter-spacing:0.775px;">41862</span>
<span class="t" id="t74" style="left:481.01px;top:469.00px;font-size:19.4px;color:#444;letter-spacing:0.272px;">Elevate Your Escape: Luxurious...</span>
<svg class="r" style="left:795px;top:465.31px" width="52" height="28" viewBox="-26 -14 52 28">
<rect x="-23.25" y="-11.3" width="46.5" height="22.6" fill="#efefef" stroke="#7a7a7a" stroke-width="1.15"/>
<g transform="translate(0,-0.4)">
<path d="M2.4 -6.0 H-6.4 A2.4 2.4 0 0 0 -8.8 -3.6 V4.0 A2.4 2.4 0 0 0 -6.4 6.4 H1.8 A2.4 2.4 0 0 0 4.2 4.0 V2.4" fill="none" stroke="#333" stroke-width="1.4"/>
<path d="M-2.9 4.2 L-1.76 0.6 L7.0 -7.5 L9.5 -4.8 L0.76 3.3 Z" fill="#333"/>
<path d="M-1.9 3.3 L-1.5 2.0 L-0.6 2.9 Z" fill="#efefef"/>
<path d="M5.6 -6.1 L8.0 -3.5" stroke="#efefef" stroke-width="0.5"/>
</g></svg>
<span class="t" id="t75" style="left:853.31px;top:469.00px;font-size:19.4px;color:#444;letter-spacing:0.364px;">Trek high and low in the at...</span>
<span class="t" id="t76" style="left:1399.21px;top:469.00px;font-size:19.4px;color:#444;letter-spacing:0.550px;">WT10</span>
<span class="t" id="t77" style="left:1546.92px;top:469.00px;font-size:19.4px;color:#444;letter-spacing:0.700px;">54</span>
<span class="t" id="t78" style="left:1742.96px;top:469.00px;font-size:19.4px;color:#444;letter-spacing:0.751px;">simple</span>
<span class="t" id="t79" style="left:283.35px;top:509.00px;font-size:19.4px;color:#444;">4</span>
<div class="r" style="left:338.2px;top:509.4px;width:21.6px;height:22.2px;border:1px solid #b9b9b9;background:#fff;box-shadow:inset 0 1.4px 2.8px rgba(0,0,0,.07);box-sizing:content-box"></div>
<svg class="r" style="left:383px;top:513.5px" width="17" height="22" viewBox="-8.5 -11 17 22">
<path d="M-3.6 -0.4 V-3.6 A3.6 3.6 0 0 1 3.6 -3.6 V-0.4" fill="none" stroke="#444" stroke-width="2.2"/>
<rect x="-6.4" y="-0.9" width="12.8" height="8" rx="0.8" fill="#444"/></svg>
<span class="t" id="t80" style="left:403.55px;top:516.00px;font-size:19.4px;color:#444;letter-spacing:0.744px;">41863</span>
<span class="t" id="t81" style="left:481.72px;top:516.00px;font-size:19.4px;color:#444;letter-spacing:0.299px;">Sleek Cruise Dual Analog Watc...</span>
<svg class="r" style="left:795px;top:511.09px" width="52" height="28" viewBox="-26 -14 52 28">
<rect x="-23.25" y="-11.3" width="46.5" height="22.6" fill="#efefef" stroke="#7a7a7a" stroke-width="1.15"/>
<g transform="translate(0,-0.4)">
<path d="M2.4 -6.0 H-6.4 A2.4 2.4 0 0 0 -8.8 -3.6 V4.0 A2.4 2.4 0 0 0 -6.4 6.4 H1.8 A2.4 2.4 0 0 0 4.2 4.0 V2.4" fill="none" stroke="#333" stroke-width="1.4"/>
<path d="M-2.9 4.2 L-1.76 0.6 L7.0 -7.5 L9.5 -4.8 L0.76 3.3 Z" fill="#333"/>
<path d="M-1.9 3.3 L-1.5 2.0 L-0.6 2.9 Z" fill="#efefef"/>
<path d="M5.6 -6.1 L8.0 -3.5" stroke="#efefef" stroke-width="0.5"/>
</g></svg>
<span class="t" id="t82" style="left:853.66px;top:515.00px;font-size:19.4px;color:#444;letter-spacing:0.448px;">Whether you're traveling ...</span>
<span class="t" id="t83" style="left:1399.21px;top:515.00px;font-size:19.4px;color:#444;letter-spacing:0.550px;">WT11</span>
<span class="t" id="t84" style="left:1546.92px;top:515.00px;font-size:19.4px;color:#444;letter-spacing:0.700px;">55</span>
<span class="t" id="t85" style="left:1742.96px;top:515.00px;font-size:19.4px;color:#444;letter-spacing:0.751px;">simple</span>
<span class="t" id="t86" style="left:283.02px;top:554.00px;font-size:19.4px;color:#444;">5</span>
<div class="r" style="left:338.2px;top:554.5px;width:21.6px;height:22.2px;border:1px solid #b9b9b9;background:#fff;box-shadow:inset 0 1.4px 2.8px rgba(0,0,0,.07);box-sizing:content-box"></div>
<svg class="r" style="left:383px;top:558.6px" width="17" height="22" viewBox="-8.5 -11 17 22">
<path d="M-3.6 -0.4 V-3.6 A3.6 3.6 0 0 1 3.6 -3.6 V-0.4" fill="none" stroke="#444" stroke-width="2.2"/>
<rect x="-6.4" y="-0.9" width="12.8" height="8" rx="0.8" fill="#444"/></svg>
<span class="t" id="t87" style="left:403.55px;top:561.00px;font-size:19.4px;color:#444;letter-spacing:0.673px;">41864</span>
<span class="t" id="t88" style="left:481.72px;top:561.00px;font-size:19.4px;color:#444;letter-spacing:0.214px;">Sleek Dash Digital Watch: Eleva...</span>
<svg class="r" style="left:795px;top:556.87px" width="52" height="28" viewBox="-26 -14 52 28">
<rect x="-23.25" y="-11.3" width="46.5" height="22.6" fill="#efefef" stroke="#7a7a7a" stroke-width="1.15"/>
<g transform="translate(0,-0.4)">
<path d="M2.4 -6.0 H-6.4 A2.4 2.4 0 0 0 -8.8 -3.6 V4.0 A2.4 2.4 0 0 0 -6.4 6.4 H1.8 A2.4 2.4 0 0 0 4.2 4.0 V2.4" fill="none" stroke="#333" stroke-width="1.4"/>
<path d="M-2.9 4.2 L-1.76 0.6 L7.0 -7.5 L9.5 -4.8 L0.76 3.3 Z" fill="#333"/>
<path d="M-1.9 3.3 L-1.5 2.0 L-0.6 2.9 Z" fill="#efefef"/>
<path d="M5.6 -6.1 L8.0 -3.5" stroke="#efefef" stroke-width="0.5"/>
</g></svg>
<span class="t" id="t89" style="left:853.31px;top:561.00px;font-size:19.4px;color:#444;letter-spacing:0.360px;">The Dash Digital Watch wi...</span>
<span class="t" id="t90" style="left:1399.21px;top:561.00px;font-size:19.4px;color:#444;letter-spacing:0.550px;">WT12</span>
<span class="t" id="t91" style="left:1547.25px;top:561.00px;font-size:19.4px;color:#444;letter-spacing:0.700px;">45</span>
<span class="t" id="t92" style="left:1742.96px;top:561.00px;font-size:19.4px;color:#444;letter-spacing:0.751px;">simple</span>
<span class="t" id="t93" style="left:282.81px;top:600.00px;font-size:19.4px;color:#444;">6</span>
<div class="r" style="left:338.2px;top:600.6px;width:21.6px;height:22.2px;border:1px solid #b9b9b9;background:#fff;box-shadow:inset 0 1.4px 2.8px rgba(0,0,0,.07);box-sizing:content-box"></div>
<svg class="r" style="left:383px;top:604.7px" width="17" height="22" viewBox="-8.5 -11 17 22">
<path d="M-3.6 -0.4 V-3.6 A3.6 3.6 0 0 1 3.6 -3.6 V-0.4" fill="none" stroke="#444" stroke-width="2.2"/>
<rect x="-6.4" y="-0.9" width="12.8" height="8" rx="0.8" fill="#444"/></svg>
<span class="t" id="t94" style="left:403.55px;top:607.00px;font-size:19.4px;color:#444;letter-spacing:0.734px;">41865</span>
<span class="t" id="t95" style="left:482.16px;top:607.00px;font-size:19.4px;color:#444;letter-spacing:0.198px;">Timeless Elegance: Luma Luxe ...</span>
<svg class="r" style="left:795px;top:602.65px" width="52" height="28" viewBox="-26 -14 52 28">
<rect x="-23.25" y="-11.3" width="46.5" height="22.6" fill="#efefef" stroke="#7a7a7a" stroke-width="1.15"/>
<g transform="translate(0,-0.4)">
<path d="M2.4 -6.0 H-6.4 A2.4 2.4 0 0 0 -8.8 -3.6 V4.0 A2.4 2.4 0 0 0 -6.4 6.4 H1.8 A2.4 2.4 0 0 0 4.2 4.0 V2.4" fill="none" stroke="#333" stroke-width="1.4"/>
<path d="M-2.9 4.2 L-1.76 0.6 L7.0 -7.5 L9.5 -4.8 L0.76 3.3 Z" fill="#333"/>
<path d="M-1.9 3.3 L-1.5 2.0 L-0.6 2.9 Z" fill="#efefef"/>
<path d="M5.6 -6.1 L8.0 -3.5" stroke="#efefef" stroke-width="0.5"/>
</g></svg>
<span class="t" id="t96" style="left:852.16px;top:606.00px;font-size:19.4px;color:#444;letter-spacing:0.547px;">Designed to stand up to y...</span>
<span class="t" id="t97" style="left:1399.21px;top:606.00px;font-size:19.4px;color:#444;letter-spacing:0.550px;">WT13</span>
<span class="t" id="t98" style="left:1547.25px;top:606.00px;font-size:19.4px;color:#444;letter-spacing:0.700px;">45</span>
<span class="t" id="t99" style="left:1742.96px;top:606.00px;font-size:19.4px;color:#444;letter-spacing:0.751px;">simple</span>
<span class="t" id="t100" style="left:282.81px;top:646.00px;font-size:19.4px;color:#444;">7</span>
<div class="r" style="left:338.2px;top:646.6px;width:21.6px;height:22.2px;border:1px solid #b9b9b9;background:#fff;box-shadow:inset 0 1.4px 2.8px rgba(0,0,0,.07);box-sizing:content-box"></div>
<svg class="r" style="left:383px;top:650.7px" width="17" height="22" viewBox="-8.5 -11 17 22">
<path d="M-3.6 -0.4 V-3.6 A3.6 3.6 0 0 1 3.6 -3.6 V-0.4" fill="none" stroke="#444" stroke-width="2.2"/>
<rect x="-6.4" y="-0.9" width="12.8" height="8" rx="0.8" fill="#444"/></svg>
<span class="t" id="t101" style="left:403.55px;top:653.00px;font-size:19.4px;color:#444;letter-spacing:0.744px;">41866</span>
<span class="t" id="t102" style="left:481.01px;top:653.00px;font-size:19.4px;color:#444;letter-spacing:0.174px;">Elevate Your Game: Luxe Bolo ...</span>
<svg class="r" style="left:795px;top:648.43px" width="52" height="28" viewBox="-26 -14 52 28">
<rect x="-23.25" y="-11.3" width="46.5" height="22.6" fill="#efefef" stroke="#7a7a7a" stroke-width="1.15"/>
<g transform="translate(0,-0.4)">
<path d="M2.4 -6.0 H-6.4 A2.4 2.4 0 0 0 -8.8 -3.6 V4.0 A2.4 2.4 0 0 0 -6.4 6.4 H1.8 A2.4 2.4 0 0 0 4.2 4.0 V2.4" fill="none" stroke="#333" stroke-width="1.4"/>
<path d="M-2.9 4.2 L-1.76 0.6 L7.0 -7.5 L9.5 -4.8 L0.76 3.3 Z" fill="#333"/>
<path d="M-1.9 3.3 L-1.5 2.0 L-0.6 2.9 Z" fill="#efefef"/>
<path d="M5.6 -6.1 L8.0 -3.5" stroke="#efefef" stroke-width="0.5"/>
</g></svg>
<span class="t" id="t103" style="left:853.31px;top:652.00px;font-size:19.4px;color:#444;letter-spacing:0.383px;">The Bolo Sport Watch is s...</span>
<span class="t" id="t104" style="left:1399.21px;top:652.00px;font-size:19.4px;color:#444;letter-spacing:0.550px;">WT14</span>
<span class="t" id="t105" style="left:1547.25px;top:652.00px;font-size:19.4px;color:#444;letter-spacing:0.700px;">49</span>
<span class="t" id="t106" style="left:1742.96px;top:652.00px;font-size:19.4px;color:#444;letter-spacing:0.751px;">simple</span>
<span class="t" id="t107" style="left:282.96px;top:692.00px;font-size:19.4px;color:#444;">8</span>
<div class="r" style="left:338.2px;top:692.6px;width:21.6px;height:22.2px;border:1px solid #b9b9b9;background:#fff;box-shadow:inset 0 1.4px 2.8px rgba(0,0,0,.07);box-sizing:content-box"></div>
<svg class="r" style="left:383px;top:696.7px" width="17" height="22" viewBox="-8.5 -11 17 22">
<path d="M-3.6 -0.4 V-3.6 A3.6 3.6 0 0 1 3.6 -3.6 V-0.4" fill="none" stroke="#444" stroke-width="2.2"/>
<rect x="-6.4" y="-0.9" width="12.8" height="8" rx="0.8" fill="#444"/></svg>
<span class="t" id="t108" style="left:403.55px;top:699.00px;font-size:19.4px;color:#444;letter-spacing:0.775px;">41867</span>
<span class="t" id="t109" style="left:481.01px;top:699.00px;font-size:19.4px;color:#444;letter-spacing:0.350px;">Elevate Your Adventures: The L...</span>
<svg class="r" style="left:795px;top:694.21px" width="52" height="28" viewBox="-26 -14 52 28">
<rect x="-23.25" y="-11.3" width="46.5" height="22.6" fill="#efefef" stroke="#7a7a7a" stroke-width="1.15"/>
<g transform="translate(0,-0.4)">
<path d="M2.4 -6.0 H-6.4 A2.4 2.4 0 0 0 -8.8 -3.6 V4.0 A2.4 2.4 0 0 0 -6.4 6.4 H1.8 A2.4 2.4 0 0 0 4.2 4.0 V2.4" fill="none" stroke="#333" stroke-width="1.4"/>
<path d="M-2.9 4.2 L-1.76 0.6 L7.0 -7.5 L9.5 -4.8 L0.76 3.3 Z" fill="#333"/>
<path d="M-1.9 3.3 L-1.5 2.0 L-0.6 2.9 Z" fill="#efefef"/>
<path d="M5.6 -6.1 L8.0 -3.5" stroke="#efefef" stroke-width="0.5"/>
</g></svg>
<span class="t" id="t110" style="left:852.16px;top:698.00px;font-size:19.4px;color:#444;letter-spacing:0.475px;">Keep track of time on the ...</span>
<span class="t" id="t111" style="left:1399.21px;top:698.00px;font-size:19.4px;color:#444;letter-spacing:0.550px;">WT15</span>
<span class="t" id="t112" style="left:1546.92px;top:698.00px;font-size:19.4px;color:#444;letter-spacing:0.700px;">54</span>
<span class="t" id="t113" style="left:1742.96px;top:698.00px;font-size:19.4px;color:#444;letter-spacing:0.751px;">simple</span>
<span class="t" id="t114" style="left:282.89px;top:738.00px;font-size:19.4px;color:#444;">9</span>
<div class="r" style="left:338.2px;top:738.5px;width:21.6px;height:22.2px;border:1px solid #b9b9b9;background:#fff;box-shadow:inset 0 1.4px 2.8px rgba(0,0,0,.07);box-sizing:content-box"></div>
<svg class="r" style="left:383px;top:742.6px" width="17" height="22" viewBox="-8.5 -11 17 22">
<path d="M-3.6 -0.4 V-3.6 A3.6 3.6 0 0 1 3.6 -3.6 V-0.4" fill="none" stroke="#444" stroke-width="2.2"/>
<rect x="-6.4" y="-0.9" width="12.8" height="8" rx="0.8" fill="#444"/></svg>
<span class="t" id="t115" style="left:403.55px;top:745.00px;font-size:19.4px;color:#444;letter-spacing:0.742px;">41868</span>
<span class="t" id="t116" style="left:481.01px;top:745.00px;font-size:19.4px;color:#444;letter-spacing:0.171px;">Elevate Your Game: Didi Luxe S...</span>
<svg class="r" style="left:795px;top:739.99px" width="52" height="28" viewBox="-26 -14 52 28">
<rect x="-23.25" y="-11.3" width="46.5" height="22.6" fill="#efefef" stroke="#7a7a7a" stroke-width="1.15"/>
<g transform="translate(0,-0.4)">
<path d="M2.4 -6.0 H-6.4 A2.4 2.4 0 0 0 -8.8 -3.6 V4.0 A2.4 2.4 0 0 0 -6.4 6.4 H1.8 A2.4 2.4 0 0 0 4.2 4.0 V2.4" fill="none" stroke="#333" stroke-width="1.4"/>
<path d="M-2.9 4.2 L-1.76 0.6 L7.0 -7.5 L9.5 -4.8 L0.76 3.3 Z" fill="#333"/>
<path d="M-1.9 3.3 L-1.5 2.0 L-0.6 2.9 Z" fill="#efefef"/>
<path d="M5.6 -6.1 L8.0 -3.5" stroke="#efefef" stroke-width="0.5"/>
</g></svg>
<span class="t" id="t117" style="left:853.31px;top:744.00px;font-size:19.4px;color:#444;letter-spacing:0.425px;">The Didi Sport Watch help...</span>
<span class="t" id="t118" style="left:1399.21px;top:744.00px;font-size:19.4px;color:#444;letter-spacing:0.550px;">WT16</span>
<span class="t" id="t119" style="left:1547.25px;top:744.00px;font-size:19.4px;color:#444;letter-spacing:0.700px;">45</span>
<span class="t" id="t120" style="left:1742.96px;top:744.00px;font-size:19.4px;color:#444;letter-spacing:0.751px;">simple</span>
<svg class="r" style="left:1119px;top:375px" width="25" height="25" viewBox="1119 375 25 25">
<circle cx="1131.4" cy="387.3" r="9.4" fill="none" stroke="#cdcdcd" stroke-width="2.2"/>
<path d="M1127.4 378.8 A9.4 9.4 0 0 1 1139.1 381.9" fill="none" stroke="#8c8c8c" stroke-width="2.2"/></svg>
<span class="t" id="t121" style="left:1149.18px;top:378.00px;font-size:19.4px;color:#444;letter-spacing:0.667px;">ai:seo-keyword</span>
<svg class="r" style="left:880px;top:350px" width="260" height="110" viewBox="880 350 260 110"><polygon points="906.25,424.75 1090.4,387.5 1073.75,381.5 1077.5,374.1 1113.75,387.25 1085,413.75 1078.75,406.9 1090.06,396.5 908.75,433.1" fill="none" stroke="rgba(255,255,255,0.45)" stroke-width="12" stroke-linejoin="round"/><polygon points="906.25,424.75 1090.4,387.5 1073.75,381.5 1077.5,374.1 1113.75,387.25 1085,413.75 1078.75,406.9 1090.06,396.5 908.75,433.1" fill="none" stroke="rgba(255,255,255,0.75)" stroke-width="6.5" stroke-linejoin="round"/><polygon points="906.25,424.75 1090.4,387.5 1073.75,381.5 1077.5,374.1 1113.75,387.25 1085,413.75 1078.75,406.9 1090.06,396.5 908.75,433.1" fill="#fb0707"/></svg>
<div class="r" style="left:1905px;top:0px;width:15px;height:782px;background:#2c2c2c;"></div>
<div class="r" style="left:1905px;top:0px;width:1px;height:782px;background:#3a3a3a;"></div>
<div class="r" style="left:1909px;top:2.3px;width:8.1px;height:480.2px;background:#6b6b6b;border-radius:4px;"></div>
</div>
</body></html>
